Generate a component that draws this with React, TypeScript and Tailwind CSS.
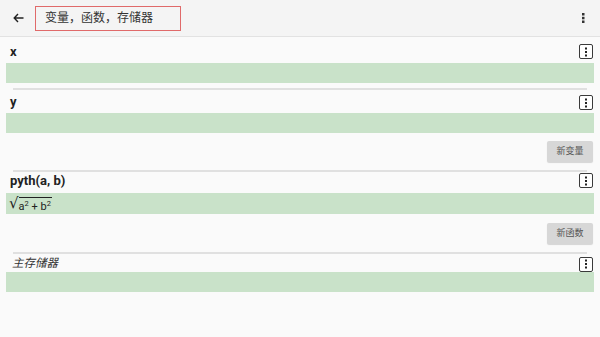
import React from "react";

const MenuBox = () => (
  <div className="w-[14px] h-[15px] border-[1.5px] border-[#3a3a3a] rounded-[2px] flex items-center justify-center bg-white">
    <svg width="4" height="10" viewBox="0 0 4 10">
      <rect x="1" y="0.5" width="2" height="2" fill="#222" />
      <rect x="1" y="4" width="2" height="2" fill="#222" />
      <rect x="1" y="7.5" width="2" height="2" fill="#222" />
    </svg>
  </div>
);

const Sep = ({ mt }: { mt: string }) => (
  <div className={`${mt} mx-[13px] h-[2px] bg-[#e0e0e0]`} />
);

const Btn = ({ label, mt }: { label: string; mt: string }) => (
  <div className={`${mt} flex justify-end pr-[7px]`}>
    <div className="w-[46px] h-[21px] rounded-[2px] bg-[#d7d7d7] flex items-center justify-center text-[9px] text-[#555] shadow-[0_1px_1px_rgba(0,0,0,0.15)]">
      {label}
    </div>
  </div>
);

export default function App() {
  return (
    <div
      className="w-[600px] h-[337px] overflow-hidden bg-[#fafafa] text-[#222]"
      style={{ fontFamily: "Roboto, 'Noto Sans CJK SC', sans-serif" }}
    >
      <div className="h-[37px] bg-[#f4f4f4] border-b border-[#e2e2e2] flex items-center">
        <div className="w-[35px] flex justify-center pl-[2px]">
          <svg width="11" height="10" viewBox="0 0 11 10">
            <path d="M10.5 5H1.5M5 1L1.2 5L5 9" stroke="#222" strokeWidth="1.4" fill="none" />
          </svg>
        </div>
        <div className="w-[146px] h-[25px] border-[1.5px] border-[#e06a6a] flex items-center pl-[9px] text-[12px] text-[#333]">
          变量，函数，存储器
        </div>
        <div className="flex-1" />
        <div className="pr-[15px]">
          <svg width="3" height="10" viewBox="0 0 3 10">
            <rect x="0" y="0" width="2.5" height="2.5" fill="#333" />
            <rect x="0" y="3.8" width="2.5" height="2.5" fill="#333" />
            <rect x="0" y="7.5" width="2.5" height="2.5" fill="#333" />
          </svg>
        </div>
      </div>

      {/* x */}
      <div className="pt-[7px] pb-[4px] pl-[10px] pr-[7px] h-[26px] flex items-center justify-between">
        <span className="font-bold text-[13px] leading-none">x</span>
        <MenuBox />
      </div>
      <div className="mx-[6px] h-[20px] bg-[#c9e2c9]" />
      <Sep mt="mt-[5px]" />

      {/* y */}
      <div className="pt-[5px] pb-[3px] pl-[10px] pr-[7px] h-[23px] flex items-center justify-between">
        <span className="font-bold text-[13px] leading-none mb-[3px]">y</span>
        <MenuBox />
      </div>
      <div className="mx-[6px] h-[20px] bg-[#c9e2c9]" />
      <Btn label="新变量" mt="mt-[8px]" />
      <Sep mt="mt-[8px]" />

      {/* pyth */}
      <div className="pt-[1px] pb-[5px] pl-[10px] pr-[7px] h-[21px] flex items-center justify-between">
        <span className="font-bold text-[13px] leading-none">pyth(a, b)</span>
        <MenuBox />
      </div>
      <div className="mx-[6px] h-[21px] bg-[#c9e2c9] flex items-center pl-[3px]">
        <span className="text-[15px] leading-none" style={{ fontFamily: "'DejaVu Sans', sans-serif" }}>√</span>
        <span className="border-t border-[#222] text-[11px] leading-none pt-[3px] pr-[1px] mt-[1px]">
          a<sup className="text-[7.5px]">2</sup> + b<sup className="text-[7.5px]">2</sup>
        </span>
      </div>
      <Btn label="新函数" mt="mt-[9px]" />
      <Sep mt="mt-[8px]" />

      {/* storage */}
      <div className="pt-[3px] pb-[1px] pl-[12px] pr-[7px] h-[18px] flex items-center justify-between">
        <span className="italic text-[11.5px] leading-none text-[#333]">主存储器</span>
        <MenuBox />
      </div>
      <div className="mx-[6px] h-[20px] bg-[#c9e2c9]" />
    </div>
  );
}
